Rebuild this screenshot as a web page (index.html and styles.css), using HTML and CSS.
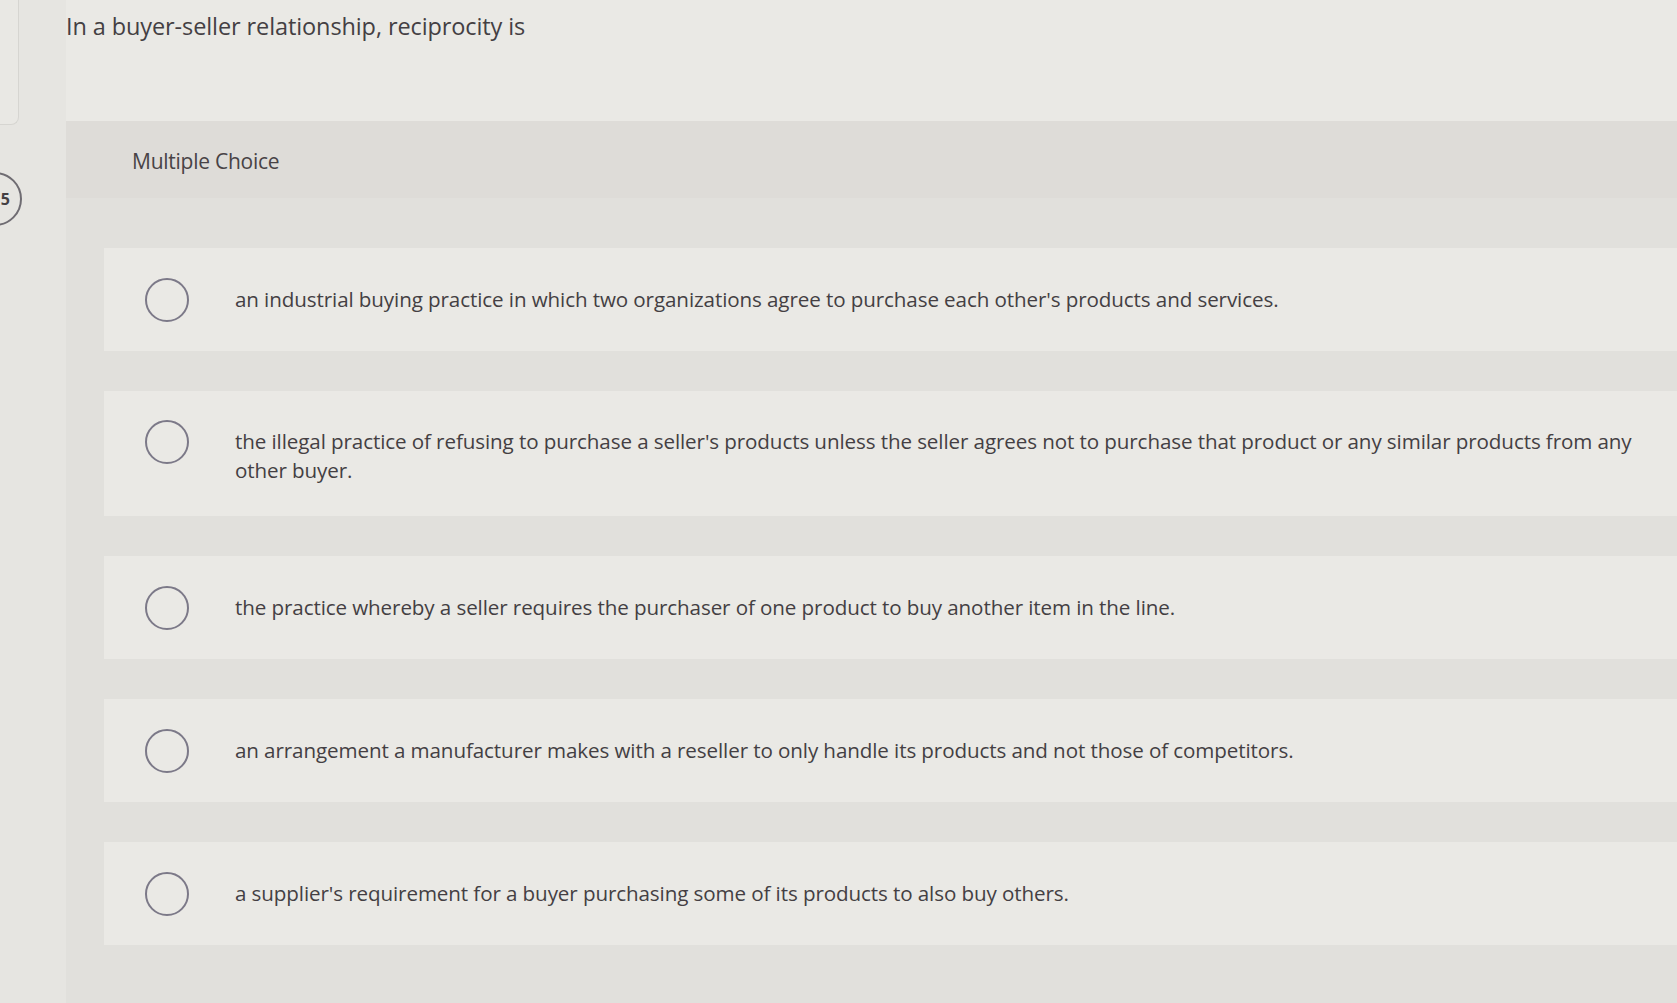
FILE: index.html
```html
<!DOCTYPE html>
<html>
<head>
<meta charset="utf-8">
<link rel="stylesheet" href="styles.css">
</head>
<body>
<div class="page">
  <aside class="gutter">
    <div class="prev-card"></div>
    <div class="qnum">5</div>
  </aside>
  <main class="main">
    <h1 class="prompt">In a buyer-seller relationship, reciprocity is</h1>
    <div class="band">Multiple Choice</div>
    <div class="choices">
      <div class="choice"><span class="radio"></span><span class="label">an industrial buying practice in which two organizations agree to purchase each other's products and services.</span></div>
      <div class="choice"><span class="radio"></span><span class="label">the illegal practice of refusing to purchase a seller's products unless the seller agrees not to purchase that product or any similar products from any other buyer.</span></div>
      <div class="choice"><span class="radio"></span><span class="label">the practice whereby a seller requires the purchaser of one product to buy another item in the line.</span></div>
      <div class="choice"><span class="radio"></span><span class="label">an arrangement a manufacturer makes with a reseller to only handle its products and not those of competitors.</span></div>
      <div class="choice"><span class="radio"></span><span class="label">a supplier's requirement for a buyer purchasing some of its products to also buy others.</span></div>
    </div>
  </main>
</div>
</body>
</html>
```

FILE: styles.css
```css
html, body {
  margin: 0;
  padding: 0;
  height: 100%;
  overflow: hidden;
}
body {
  background: #e7e6e2;
  font-family: "Open Sans", Lato, sans-serif;
  color: #443f43;
}
.page {
  display: flex;
  height: 1003px;
}
.gutter {
  width: 66px;
  flex: 0 0 66px;
  background: #e6e5e1;
  display: flex;
  flex-direction: column;
}
.prev-card {
  width: 30px;
  height: 124px;
  margin-left: -13px;
  border: 1px solid #d6d5d1;
  border-radius: 0 0 8px 0;
  border-top: none;
  background: #e9e8e4;
}
.qnum {
  width: 54px;
  height: 54px;
  margin-top: 47px;
  margin-left: -32px;
  box-sizing: border-box;
  border: 2px solid #6f6c72;
  border-radius: 50%;
  display: flex;
  align-items: center;
  justify-content: flex-end;
  padding-right: 10px;
  font-size: 16px;
  font-weight: 700;
  color: #443f43;
}
.main {
  flex: 1;
  display: flex;
  flex-direction: column;
  background: #eae9e5;
}
.prompt {
  margin: 0;
  padding: 11px 0 0 0;
  height: 121px;
  box-sizing: border-box;
  font-size: 23.5px;
  font-weight: 500;
  line-height: 31px;
  color: #443f43;
  letter-spacing: -0.1px;
}
.band {
  height: 77px;
  background: #dedcd8;
  padding-left: 66px;
  display: flex;
  align-items: center;
  font-size: 21px;
  font-weight: 500;
  color: #484346;
  box-sizing: border-box;
  padding-top: 3px;
  letter-spacing: -0.25px;
}
.choices {
  flex: 1;
  background: #e1e0dc;
  padding: 50px 0 0 38px;
  display: flex;
  flex-direction: column;
  gap: 40px;
}
.choice {
  background: #eae9e5;
  min-height: 103px;
  display: flex;
  align-items: center;
  padding: 0 20px 0 41px;
  box-sizing: border-box;
}
.choice:nth-child(2) {
  min-height: 125px;
  align-items: flex-start;
  padding-top: 29px;
}
.radio {
  flex: 0 0 44px;
  width: 44px;
  height: 44px;
  box-sizing: border-box;
  border: 2px solid #7c7988;
  border-radius: 50%;
  margin-right: 46px;
}
.label {
  font-size: 20.6px;
  font-weight: 500;
  line-height: 29px;
  color: #443f43;
  letter-spacing: -0.1px;
}
.choice:nth-child(2) .label {
  margin-top: 7px;
}
```
